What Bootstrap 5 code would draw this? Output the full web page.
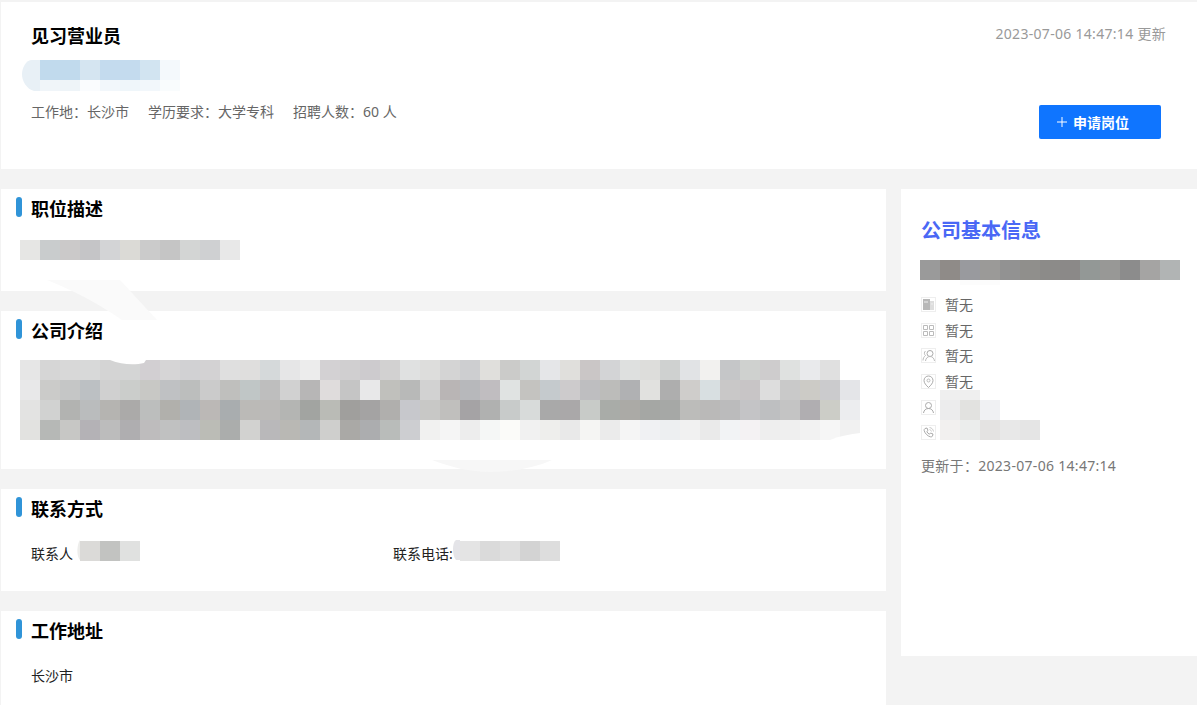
<!DOCTYPE html>
<html lang="zh-CN">
<head>
  <meta charset="UTF-8">
  <meta name="viewport" content="width=device-width, initial-scale=1.0">
  <title>见习营业员</title>
  <link href="https://cdn.jsdelivr.net/npm/bootstrap@5.3.0/dist/css/bootstrap.min.css" rel="stylesheet">
  <style>
    html, body {
      height: 705px;
      overflow: hidden;
    }
    body {
      background-color: #f3f3f3;
      font-family: "Noto Sans", "Noto Sans CJK SC", sans-serif;
      font-size: 14px;
      color: #333;
    }
    .page-wrap {
      position: relative;
      padding: 2px 0 0 1px;
    }
    .job-head {
      height: 167px;
      padding: 21px 31px 30px 30px;
    }
    .job-title {
      font-size: 18px;
      font-weight: 700;
      line-height: 26px;
      color: #000;
      margin: 0 0 11px;
    }
    .job-meta {
      line-height: 21px;
      color: #666;
      margin-top: 10px;
      gap: 19px;
    }
    .job-date {
      line-height: 21px;
      color: #999;
      letter-spacing: .3px;
    }
    .apply-btn {
      width: 122px;
      height: 34px;
      margin-right: 5px;
      padding: 0 0 0 18px;
      background-color: #0f75ff;
      border: 0;
      border-radius: 2px;
      color: #fff;
      font-size: 14px;
      font-weight: 700;
    }
    .apply-btn svg {
      margin-right: 6px;
    }
    .main-col {
      width: 885px;
    }
    .side-col {
      width: 296px;
      height: 467px;
      padding: 29px 16px 0 20px;
    }
    .sec-card {
      position: relative;
      padding: 8px 0 0 30px;
    }
    .sec-bar {
      position: absolute;
      left: 15px;
      top: 8px;
      width: 6px;
      height: 20px;
      background-color: #3094d8;
      border-radius: 3px;
    }
    .sec-title {
      font-size: 18px;
      font-weight: 700;
      line-height: 24px;
      color: #000;
      margin: 0;
    }
    .sec-desc { height: 102px; }
    .sec-company { height: 158px; }
    .sec-contact { height: 102px; }
    .sec-addr { height: 94px; }
    .pixel-row {
      display: flex;
      height: 20px;
    }
    .pixel-row.short { height: 11px; }
    .pixel-row.thin { height: 5px; }
    .pixel-cell {
      width: 20px;
      flex: none;
    }
    .desc-blur {
      margin: 19px 0 0 -11px;
    }
    .sec-company .desc-blur {
      margin-top: 17px;
    }
    .name-blur {
      margin-left: 9px;
    }
    .contact-label {
      line-height: 21px;
      margin-top: 22px;
      color: #222;
    }
    .contact-blur {
      margin: 20px 0 0 7px;
    }
    .contact-item-a { width: 362px; }
    .addr-text {
      line-height: 21px;
      margin-top: 22px;
      color: #222;
    }
    .side-title {
      font-size: 20px;
      font-weight: 700;
      line-height: 26px;
      color: #4a68f5;
      margin: 0 0 16px;
    }
    .side-name-blur {
      margin-left: -1px;
    }
    .side-rows {
      position: relative;
      margin-top: 7px;
    }
    .side-row {
      height: 25.6px;
      color: #666;
    }
    .side-row svg {
      flex: none;
      margin-right: 9px;
    }
    .side-contact-blur {
      position: absolute;
      left: 19px;
      top: 98px;
    }
    .side-date {
      line-height: 21px;
      margin-top: 9px;
      color: #777;
      letter-spacing: .3px;
    }
    .smudge-layer {
      position: absolute;
      left: 0;
      top: 0;
      pointer-events: none;
    }
  </style>
</head>
<body>
  <div class="page-wrap">

    <!-- 岗位头部 -->
    <div class="job-head bg-white d-flex justify-content-between">
      <div>
        <div class="job-title">见习营业员</div>
        <div class="name-blur" data-blur>
          <div class="pixel-row" data-c="c1daed c1daed d5e5f1 c4dbee c4dbee d2e4f1 f4f9fc"></div>
          <div class="pixel-row short" data-c="f0f5f9 eef4f8 fafcfe f2f7fb eff6fa f2f7fb f9fcfd"></div>
        </div>
        <div class="job-meta d-flex">
          <span>工作地：长沙市</span>
          <span>学历要求：大学专科</span>
          <span>招聘人数：60 人</span>
        </div>
      </div>
      <div class="d-flex flex-column justify-content-between align-items-end">
        <div class="job-date">2023-07-06 14:47:14 更新</div>
        <button type="button" class="btn apply-btn d-flex align-items-center"><svg width="10" height="10" viewBox="0 0 10 10"><path d="M5 0v10M0 5h10" stroke="#fff"/></svg>申请岗位</button>
      </div>
    </div>

    <div class="d-flex align-items-start mt-3 pt-1" style="gap:15px">
      <div class="main-col d-flex flex-column gap-3">
        <div class="d-flex flex-column" style="gap:20px">
          <section class="sec-card sec-desc bg-white">
            <span class="sec-bar"></span>
            <h2 class="sec-title">职位描述</h2>
            <div class="desc-blur" data-blur>
              <div class="pixel-row" data-c="e6e6e4 c9cccd cbc9c9 c5c5c7 d3d4d6 dbdad6 cbcbcb c5c5c5 d3d5d4 cfd0d2 e8e8e8"></div>
            </div>
          </section>

          <section class="sec-card sec-company bg-white">
            <span class="sec-bar"></span>
            <h2 class="sec-title">公司介绍</h2>
            <div class="desc-blur" data-blur>
              <div class="pixel-row" data-c="e6e6e6 d6d6d6 d8d8d8 d8d9d9 d4d4d4 d4d5d5 d2cfd2 d6d5d6 d1d1d3 d3d2d3 dfdfdf dfdedd d5d9da e6e6e7 ececec d3d1d3 d0cfd0 cdcbce d2d1d1 e0e1e1 dddddc d4d4d4 cdced0 e0dfdc cbcbc9 d2d5d4 e5e6e8 e0dfdc cac6c6 d3d4d6 dee0df dddddb cfd1d0 e1e3e5 f2f1ef c5c6c8 cfd1cf cecccd dfe1e0 e9eaec e0e0e0"></div>
              <div class="pixel-row" data-c="e8e8e9 cbcbc9 c5c6c6 bcc0c3 d0d0d0 cbcdcb c8c8c5 bfc1c3 bcbebd cbcbcb bfbfbd c0c6c6 bebebe d1d1d1 b7b6b6 dfdcdc c5c5c5 e8e8e9 c0c0bc b8b9b8 d2d2d2 b9b5b5 b7b8bb c0bdc0 e0e3e2 c4c3c0 c5cacd cdcbcc bebec0 bcbcba b0b1b3 e1e1df aeaeae cfcdcb d8dfe1 c9c8c8 c8c5c6 dddddd c9c9c9 cccbc6 cbcbcd e4e5e8"></div>
              <div class="pixel-row" data-c="e3e3e2 d1d2d1 b2b3b1 babcbd b5b4b1 abaaa9 bcbebd b1b0ac b0b4b7 bbb8b6 a9adaf bbbab7 bbbab8 b4b5b3 a2a4a1 babbb6 a09f9d a4a3a3 b0afad c7c8cc c8c8c6 c0bfbd a5a3a5 b0b1b0 c8cbca d8dbda a9a9a9 aaa8a9 c8cbc8 a9aca8 abaaa6 a5a7a4 a6a8a6 bcbcba bab9b8 bbbbbc c4c4c6 bebfc1 c4c4c4 b0aeb1 cccdc7 ecedef"></div>
              <div class="pixel-row" data-c="e2e2e0 b6b8b6 c7c7c5 b4b2b6 bcbcbc afaeb0 bebcbd c0c1c1 bdbec1 bbbcb6 abadac d2d2d0 b9b8ba b9b8b4 b4b7b8 cfcfcd aaa9a6 acadaf b9bcba cdced1 f1f1f0 f5f5f5 ededed f5f7f6 fbfbf9 f1f1f1 eeeeec e9e9e9 f5f5f3 ebebeb f5f5f5 f0f1f3 edeff1 f1f1f1 eaeaea f2f3f5 f4f2f3 eeeeee efefef f2f2f2 f6f6f6 f1f1f1"></div>
            </div>
          </section>

          <section class="sec-card sec-contact bg-white">
            <span class="sec-bar"></span>
            <h2 class="sec-title">联系方式</h2>
            <div class="d-flex">
              <div class="contact-item-a d-flex align-items-start">
                <span class="contact-label">联系人</span>
                <div class="contact-blur" data-blur>
                  <div class="pixel-row" data-c="dbdad8 c2c3c1 e0e1e0"></div>
                </div>
              </div>
              <div class="d-flex align-items-start">
                <span class="contact-label">联系电话:</span>
                <div class="contact-blur" data-blur>
                  <div class="pixel-row" data-c="e4e4e4 dadada dfdfdf d3d3d3 dddddd"></div>
                </div>
              </div>
            </div>
          </section>

          <section class="sec-card sec-addr bg-white">
            <span class="sec-bar"></span>
            <h2 class="sec-title">工作地址</h2>
            <div class="addr-text">长沙市</div>
          </section>
        </div>
      </div>

      <!-- 公司基本信息 -->
      <aside class="side-col bg-white">
        <h3 class="side-title">公司基本信息</h3>
        <div class="side-name-blur" data-blur>
          <div class="pixel-row" data-c="9a9a9a 8f8b88 999a9e 9b9a98 929292 908f8c 8c8b89 8b8988 939896 989896 8c8c8c a5a4a3 b1b4b4"></div>
          <div class="pixel-row thin" data-c="ffffff ffffff fcfcfc fcfcfc"></div>
        </div>
        <div class="side-rows">
          <div class="side-row d-flex align-items-center">
            <svg width="15" height="15" viewBox="0 0 15 15"><rect x=".5" y=".5" width="14" height="14" fill="#fff" stroke="#eee"/><rect x="2" y="2" width="7" height="11" fill="#b8b8b8"/><rect x="9" y="4" width="4" height="9" fill="#ddd"/><path d="M3 5h4M10 7h2" stroke="#eee"/></svg>
            <span>暂无</span>
          </div>
          <div class="side-row d-flex align-items-center">
            <svg width="15" height="15" viewBox="0 0 15 15" fill="none"><rect x=".5" y=".5" width="14" height="14" stroke="#eee"/><path d="M2.500 2.500h4v4h-4zM8.500 2.500h4v4h-4zM2.500 8.500h4v4h-4zM8.500 8.500h4v4h-4z" stroke="#bbb"/></svg>
            <span>暂无</span>
          </div>
          <div class="side-row d-flex align-items-center">
            <svg width="15" height="15" viewBox="0 0 15 15" fill="none"><rect x=".5" y=".5" width="14" height="14" stroke="#eee"/><circle cx="9" cy="5.500" r="3" stroke="#aaa"/><path d="M4.500 13c.3-2.700 2-4.500 4.500-4.500s4.200 1.800 4.500 4.500M4.500 3C3 4 3 6.500 4.500 7.500 3 8.500 2 10.500 2 12.500" stroke="#bbb"/></svg>
            <span>暂无</span>
          </div>
          <div class="side-row d-flex align-items-center">
            <svg width="15" height="15" viewBox="0 0 15 15" fill="none"><rect x=".5" y=".5" width="14" height="14" stroke="#eee"/><path d="M7.500 13.500C5 11.200 3 9 3 6.500a4.500 4.500 0 0 1 9 0c0 2.500-2 4.700-4.500 7z" stroke="#aaa"/><circle cx="7.500" cy="6.500" r="1.500" stroke="#bbb"/></svg>
            <span>暂无</span>
          </div>
          <div class="side-row d-flex align-items-center">
            <svg width="15" height="15" viewBox="0 0 15 15" fill="none"><rect x=".5" y=".5" width="14" height="14" stroke="#eee"/><circle cx="7.500" cy="5.500" r="3" stroke="#aaa"/><path d="M2.500 13c.4-2.800 2.300-4.500 5-4.500s4.600 1.700 5 4.500" stroke="#aaa"/></svg>
          </div>
          <div class="side-row d-flex align-items-center">
            <svg width="15" height="15" viewBox="0 0 15 15" fill="none"><rect x=".5" y=".5" width="14" height="14" stroke="#eee"/><path d="M4 3.500 6 3l1 2.500-1.200 1c.5 1.200 1.500 2.200 2.700 2.700l1-1.200 2.500 1-.5 2c-.3.800-1.200 1-2.200.8C6.500 11 4 8.500 3.200 5.700 3 4.800 3.300 4 4 3.500z" stroke="#aaa"/><path d="M8.500 2.500c2.200.3 3.700 1.800 4 4M8.500 4.500c1 .2 1.800 1 2 2" stroke="#ccc"/></svg>
          </div>
          <div class="side-contact-blur" data-blur>
            <div class="pixel-row" style="height:10px" data-c="efefef efefef"></div>
            <div class="pixel-row" data-c="ececed e2e2e0 f0f1f3"></div>
            <div class="pixel-row" data-c="f2f0ef ebedec e4e3e2 e8e8e8 e5e5e5"></div>
          </div>
        </div>
        <div class="side-date">更新于：2023-07-06 14:47:14</div>
      </aside>
    </div>

    <!-- 打码残留的浅色污迹 -->
    <svg class="smudge-layer" width="1197" height="705" viewBox="0 0 1197 705">
      <path d="M47 280H120L157 320H122C105 308 78 292 47 280z" fill="#fafafa"/>
      <path d="M110 360H146L144 363C135 365 122 365 110 360z" fill="#fff"/>
      <path d="M432 460H552C535 468 510 472 490 472 470 472 450 467 432 460z" fill="#f7f7f7"/>
      <path d="M830 440C840 436 850 434 860 433V441H830z" fill="#fff"/>
      <path d="M40 60H32C26 60 22 68 22 74 22 82 27 89 34 91H40z" fill="#e8f0f6"/>
      <path d="M80 540C77 544 76 556 80 560z" fill="#ededeb"/>
      <path d="M460 540H456C452 542 452 556 456 560H460z" fill="#e4e4e8"/>
    </svg>
  </div>

  <script src="https://cdn.jsdelivr.net/npm/bootstrap@5.3.0/dist/js/bootstrap.bundle.min.js"></script>
  <script>
    // 马赛克色块
    document.querySelectorAll("[data-blur] .pixel-row").forEach(function (row) {
      row.dataset.c.split(" ").forEach(function (color) {
        const cell = document.createElement("div");
        cell.className = "pixel-cell";
        cell.style.backgroundColor = "#" + color;
        row.appendChild(cell);
      });
    });
  </script>
</body>
</html>
